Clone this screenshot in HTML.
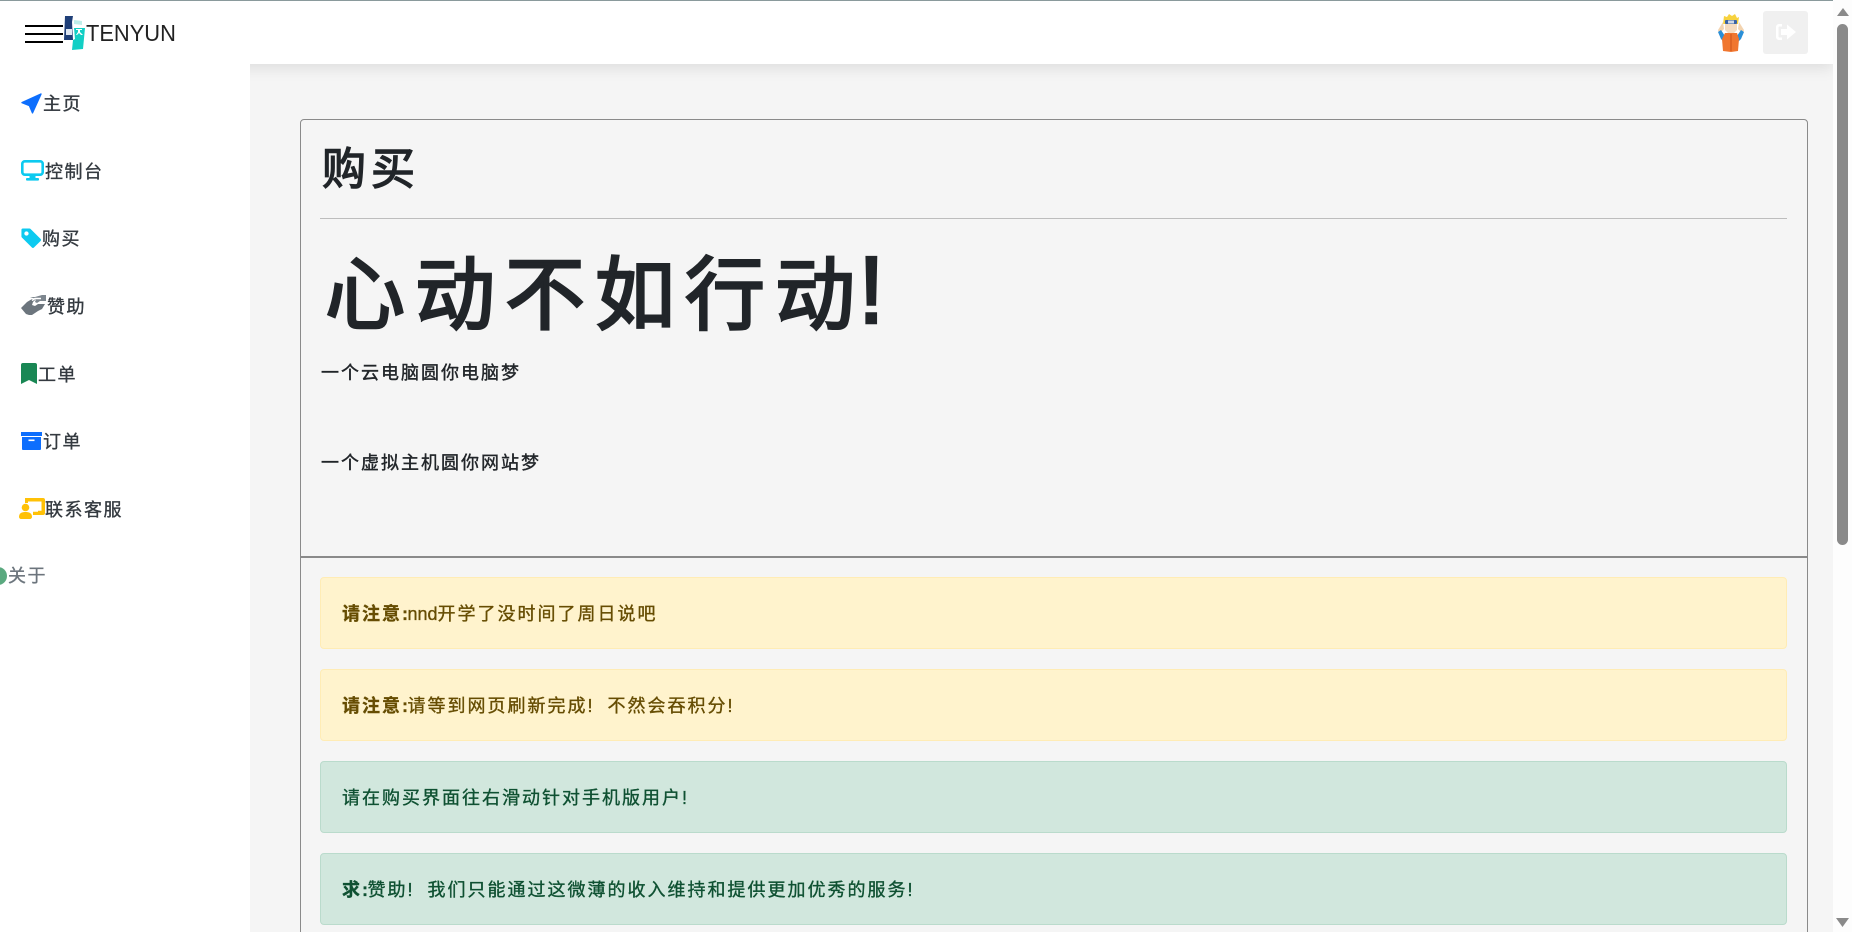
<!DOCTYPE html>
<html lang="zh">
<head>
<meta charset="utf-8">
<title>TENYUN</title>
<style>
html,body{margin:0;padding:0;width:1852px;height:932px;overflow:hidden;background:#f5f5f5;}
body{position:relative;font-family:"Liberation Sans","Noto Sans CJK SC",sans-serif;color:#212529;font-size:16px;}
.abs,.nav,.txt,svg{position:absolute;}
#main{position:absolute;left:250px;top:0;width:1583px;height:932px;background:#f5f5f5;}
#side{position:absolute;left:0;top:0;width:250px;height:932px;background:#fff;z-index:3;}
#top{position:absolute;left:0;top:0;width:1833px;height:64px;background:#fff;border-top:1px solid #8a9a9c;box-sizing:border-box;z-index:2;box-shadow:0 4px 14px rgba(0,0,0,.10);}
#logoarea{position:absolute;left:0;top:0;width:250px;height:64px;background:#fff;z-index:4;border-top:1px solid #8a9a9c;box-sizing:border-box;}
#sb{position:absolute;left:1833px;top:0;width:19px;height:932px;background:#fdfdfd;z-index:5;}
.nav{font-size:18px;line-height:24px;letter-spacing:1.5px;color:#343a40;white-space:nowrap;-webkit-text-stroke:.35px currentColor;z-index:5;}
.card{position:absolute;left:300px;width:1508px;box-sizing:border-box;border:1px solid #8a8a8a;background:#f5f5f5;}
.alert{position:absolute;left:320px;width:1467px;height:72px;box-sizing:border-box;border:1px solid;border-radius:4px;padding-left:21px;padding-top:1px;line-height:70px;font-size:18px;letter-spacing:2px;white-space:nowrap;-webkit-text-stroke:.35px currentColor;}
.w{background:#fff3cd;border-color:#ffecb5;color:#664d03;}
.g{background:#d1e7dd;border-color:#badbcc;color:#0f5132;}
.alert b{font-weight:700;}
.c{letter-spacing:-.5px;}
.n{letter-spacing:0;}
.x{display:inline-block;width:20px;letter-spacing:0;}
.txt{white-space:nowrap;}
</style>
</head>
<body>
<div id="main"></div>

<div id="top"></div>
<div id="side"></div>
<div id="logoarea">
  <div class="abs" style="left:25px;top:24px;width:38px;height:2px;background:#000"></div>
  <div class="abs" style="left:25px;top:32px;width:38px;height:2px;background:#000"></div>
  <div class="abs" style="left:25px;top:40px;width:38px;height:2px;background:#000"></div>
  <svg style="left:62px;top:15px" width="24" height="34" viewBox="0 0 24 34">
    <path d="M3 0h8l-1 6 1 18H2z" fill="#1f3f78"/>
    <path d="M12 4l8 1v4l-8-1z" fill="#bfeeea"/>
    <path d="M12 12h11l-2 21-11 1 1-10 2-1z" fill="#12cfc5"/>
    <rect x="4" y="13" width="6" height="6" fill="#dfe7f2"/>
    <path d="M14 13h6v1h-2v2l3 3h-2l-2-2-2 2h-1l2-3v-2h-2z" fill="#fff"/>
  </svg>
  <div class="txt" style="left:86px;top:17px;font-size:23.5px;line-height:30px;color:#222;transform:scaleX(.93);transform-origin:left center;">TENYUN</div>
</div>

<svg style="left:21px;top:93px;z-index:6" width="21" height="21" viewBox="0 0 16 16" fill="#0d6efd"><path d="M15.6.4a.5.5 0 0 1 .1.6L9.2 15.4a.5.5 0 0 1-.9 0L6 10 .5 7.8a.5.5 0 0 1 0-.9L15 .3a.5.5 0 0 1 .6.1z"/></svg>
<div class="nav" style="left:43px;top:92px">主页</div>

<svg style="left:21px;top:160px;z-index:6" width="23" height="21" viewBox="0 0 23 21" fill="none"><rect x="1.300" y="1.300" width="20.400" height="13.400" rx="2.500" stroke="#0dcaf0" stroke-width="2.600"/><rect x="8.500" y="15" width="6" height="3.500" fill="#0dcaf0"/><rect x="5" y="18" width="13" height="2.600" rx="1" fill="#0dcaf0"/></svg>
<div class="nav" style="left:45px;top:160px">控制台</div>

<svg style="left:20px;top:227px;z-index:6" width="23" height="23" viewBox="0 0 16 16" fill="#0dcaf0"><path d="M2 1a1 1 0 0 0-1 1v4.586a1 1 0 0 0 .293.707l7 7a1 1 0 0 0 1.414 0l4.586-4.586a1 1 0 0 0 0-1.414l-7-7A1 1 0 0 0 6.586 1H2zm4 3.5a1.5 1.5 0 1 1-3 0 1.5 1.5 0 0 1 3 0z"/></svg>
<div class="nav" style="left:42px;top:227px">购买</div>

<svg style="left:21px;top:295px;z-index:6" width="25" height="21" viewBox="0 0 25 21" fill="#6c757d"><path d="M0 13l6-6 5-3h4l-3 3-1 3 3 1 3-2h7l-3 5-4 2-6 4H8l-3-1z"/><path d="M9 2h5l7-2h4v6h-6l-3 2-2-1 1-3z" fill="#7d868e"/><path d="M11 5.500l3-2h6" stroke="#fff" stroke-width="1.600" fill="none"/></svg>
<div class="nav" style="left:47px;top:295px">赞助</div>

<svg style="left:21px;top:363px;z-index:6" width="16" height="21" viewBox="0 0 16 21" fill="#198754"><path d="M0 2a2 2 0 0 1 2-2h12a2 2 0 0 1 2 2v19l-8-4-8 4z"/></svg>
<div class="nav" style="left:38px;top:363px">工单</div>

<svg style="left:21px;top:432px;z-index:6" width="21" height="18" viewBox="0 0 21 18" fill="#0d6efd"><rect x="0" y="0" width="21" height="4"/><path d="M1 5h19v12a1 1 0 0 1-1 1H2a1 1 0 0 1-1-1z"/><rect x="7.500" y="7.500" width="6" height="1.600" fill="#fff"/></svg>
<div class="nav" style="left:43px;top:430px">订单</div>

<svg style="left:19px;top:498px;z-index:6" width="26" height="21" viewBox="0 0 26 21" fill="#ffc107"><path d="M6 0h18a2 2 0 0 1 2 2v13a2 2 0 0 1-2 2H14v-3.200h5v-1h3.500V3.500H9V5H6z"/><circle cx="6.500" cy="9.500" r="3.800"/><path d="M0 19c0-4 3-5 6.500-5s6.500 1 6.500 5c0 1-1 2-2 2H2c-1 0-2-1-2-2z"/></svg>
<div class="nav" style="left:45px;top:498px">联系客服</div>

<div class="abs" style="left:-11px;top:567px;width:18px;height:18px;border-radius:50%;background:#5aa97f;z-index:6"></div>
<div class="nav" style="left:8px;top:564px;color:#6c757d">关于</div>

<!-- avatar -->
<svg style="left:1717px;top:13px;z-index:6" width="28" height="40" viewBox="0 0 28 40">
  <path d="M6 11L7 3l3 1 2-3 3 2 3-2 2 4 2-1-1 7z" fill="#f7d23e"/>
  <rect x="8" y="7" width="12" height="4" rx="1" fill="#3a62a6"/>
  <rect x="11" y="7.500" width="6" height="3" fill="#cfd8e4"/>
  <path d="M8 11h12v6l-3 3h-6l-3-3z" fill="#f6dcc0"/>
  <path d="M6 9L1 17l1 4 5-5z" fill="#f3d4b0"/>
  <path d="M22 9l5 8-1 4-5-5z" fill="#f3d4b0"/>
  <path d="M1 19l3-2 4 6-1 6-3-3z" fill="#2a8fd8"/>
  <path d="M27 19l-3-2-4 6 1 6 3-3z" fill="#2a8fd8"/>
  <path d="M8 20h12l2 6-1 12-7 1-8-1-1-12z" fill="#f0762f"/>
  <rect x="13.300" y="21" width="1.400" height="17" fill="#d65e20"/>
</svg>
<div class="abs" style="left:1763px;top:11px;width:45px;height:43px;background:#f0f0f0;border-radius:3px;z-index:6"></div>
<svg style="left:1776px;top:24px;z-index:7" width="20" height="16" viewBox="0 0 20 16" fill="#fff"><path d="M0 3a3 3 0 0 1 3-3h3v2.500H3.500a1 1 0 0 0-1 1v9a1 1 0 0 0 1 1H6V16H3a3 3 0 0 1-3-3z"/><path d="M5 5h6V.5L20 8l-9 7.500V11H5z"/></svg>

<!-- scrollbar -->
<div id="sb">
  <svg style="left:4px;top:8px" width="12" height="8" viewBox="0 0 12 8" fill="#8a8a8a"><path d="M6 0l6 8H0z"/></svg>
  <div class="abs" style="left:4px;top:24px;width:11px;height:521px;border-radius:6px;background:#8a8a8a"></div>
  <svg style="left:3px;top:918px" width="13" height="9" viewBox="0 0 13 9" fill="#8a8a8a"><path d="M0 0h13L6.500 9z"/></svg>
</div>

<!-- card top -->
<div class="card" style="top:119px;height:438px;border-radius:4px 4px 0 0;"></div>
<div class="card" style="top:557px;height:400px;"></div>
<div class="abs" style="left:320px;top:218px;width:1467px;height:1px;background:#bdbdbd"></div>

<div class="txt" style="left:322px;top:140px;font-size:44px;line-height:60px;letter-spacing:5px;-webkit-text-stroke:1.4px currentColor;">购买</div>
<div class="txt" style="left:325px;top:246px;font-size:80px;line-height:100px;letter-spacing:10px;-webkit-text-stroke:2.6px currentColor;">心动不如行动<span style="font-size:96px;line-height:0;letter-spacing:0;margin-left:-7px">!</span></div>
<div class="txt" style="left:321px;top:360px;font-size:18px;line-height:26px;letter-spacing:2px;-webkit-text-stroke:.4px currentColor;">一个云电脑圆你电脑梦</div>
<div class="txt" style="left:321px;top:450px;font-size:18px;line-height:26px;letter-spacing:2px;-webkit-text-stroke:.4px currentColor;">一个虚拟主机圆你网站梦</div>

<div class="alert w" style="top:577px"><b>请注意<span class="c">:</span></b><span class="n">nnd</span>开学了没时间了周日说吧</div>
<div class="alert w" style="top:669px"><b>请注意<span class="c">:</span></b>请等到网页刷新完成<span class="x">!</span>不然会吞积分<span class="x">!</span></div>
<div class="alert g" style="top:761px">请在购买界面往右滑动针对手机版用户<span class="x">!</span></div>
<div class="alert g" style="top:853px"><b>求<span class="c">:</span></b>赞助<span class="x">!</span>我们只能通过这微薄的收入维持和提供更加优秀的服务<span class="x">!</span></div>
</body>
</html>
